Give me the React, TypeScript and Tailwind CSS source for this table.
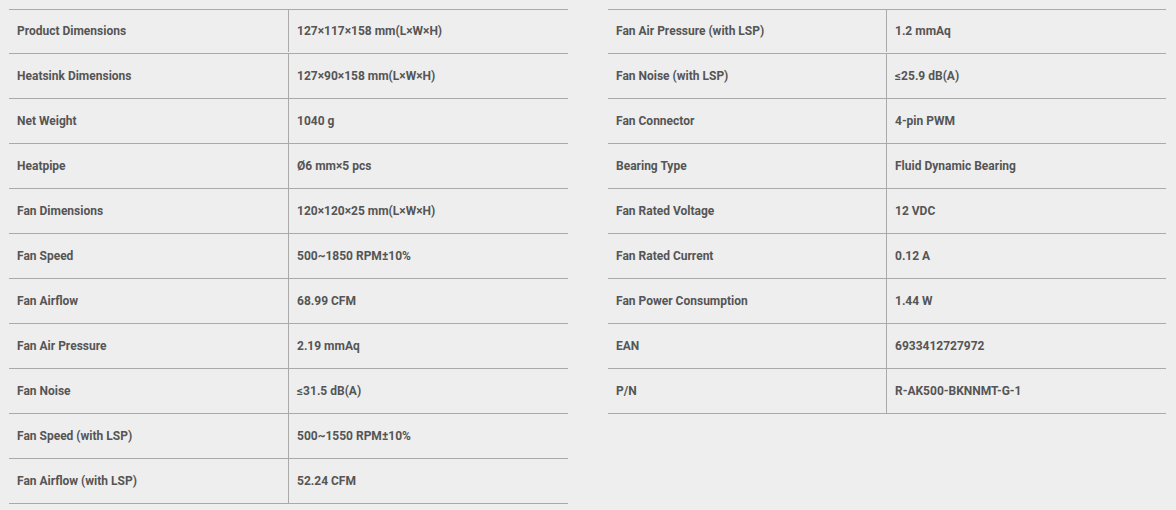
import React from 'react';

type Spec = [string, string];

const left: Spec[] = [
  ['Product Dimensions', '127×117×158 mm(L×W×H)'],
  ['Heatsink Dimensions', '127×90×158 mm(L×W×H)'],
  ['Net Weight', '1040 g'],
  ['Heatpipe', 'Ø6 mm×5 pcs'],
  ['Fan Dimensions', '120×120×25 mm(L×W×H)'],
  ['Fan Speed', '500~1850 RPM±10%'],
  ['Fan Airflow', '68.99 CFM'],
  ['Fan Air Pressure', '2.19 mmAq'],
  ['Fan Noise', '≤31.5 dB(A)'],
  ['Fan Speed (with LSP)', '500~1550 RPM±10%'],
  ['Fan Airflow (with LSP)', '52.24 CFM'],
];

const right: Spec[] = [
  ['Fan Air Pressure (with LSP)', '1.2 mmAq'],
  ['Fan Noise (with LSP)', '≤25.9 dB(A)'],
  ['Fan Connector', '4-pin PWM'],
  ['Bearing Type', 'Fluid Dynamic Bearing'],
  ['Fan Rated Voltage', '12 VDC'],
  ['Fan Rated Current', '0.12 A'],
  ['Fan Power Consumption', '1.44 W'],
  ['EAN', '6933412727972'],
  ['P/N', 'R-AK500-BKNNMT-G-1'],
];

const SpecTable: React.FC<{ rows: Spec[]; className: string; labelClass: string }> = ({ rows, className, labelClass }) => (
  <div className={`${className} border-t border-[#aaaaaa]`}>
    {rows.map(([k, v], i) => (
      <div key={k} className={`flex border-b border-[#aaaaaa] ${i === 0 ? 'h-[44px] pb-px' : 'h-[45px]'}`}>
        <div className={`${labelClass} shrink-0 flex items-center px-2 border-r border-[#aaaaaa]`}>{k}</div>
        <div className="flex-1 flex items-center px-2">{v}</div>
      </div>
    ))}
  </div>
);

export default function App() {
  return (
    <div
      className="w-[1176px] h-[510px] bg-[#eeeeee] pl-[9px] pt-[9px] flex items-start gap-[40px] text-[12px] font-bold text-[#555555]"
      style={{ fontFamily: 'Roboto, "Liberation Sans", sans-serif' }}
    >
      <SpecTable rows={left} className="w-[559px]" labelClass="w-[280px]" />
      <SpecTable rows={right} className="w-[558px]" labelClass="w-[279px]" />
    </div>
  );
}
